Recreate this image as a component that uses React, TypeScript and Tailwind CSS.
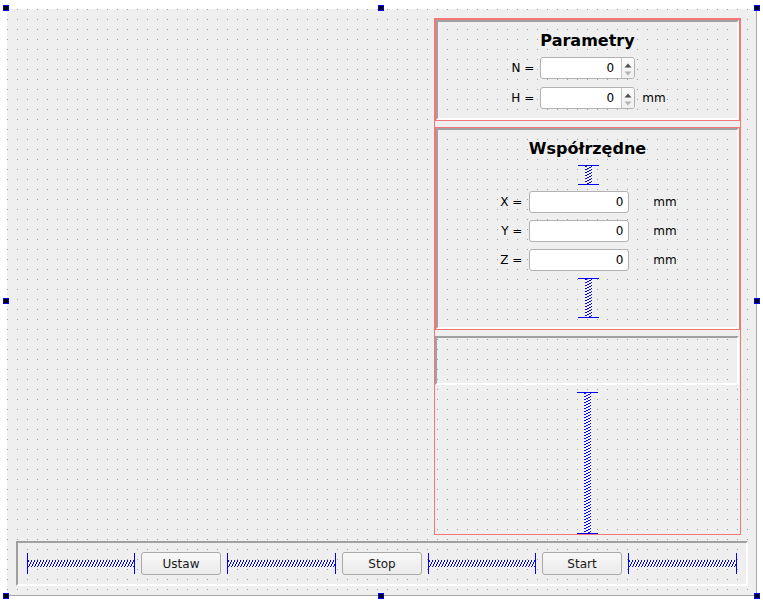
import React, { useId } from "react";

const OFFS = [0, 1, 1, 2, 2, 0, 0];

function HSpacer({ w }: { w: number }) {
  const id = useId().replace(/:/g, "");
  const h = 21;
  return (
    <svg width={w} height={h} shapeRendering="crispEdges" className="block shrink-0">
      <defs>
        <pattern id={"hp" + id} patternUnits="userSpaceOnUse" x={0} y={0} width={3} height={h}>
          {OFFS.map((o, k) => (
            <rect key={"w" + k} x={o} y={13 - k} width={1} height={1} fill="#ffffff" />
          ))}
          {OFFS.map((o, k) => (
            <rect key={"b" + k} x={(o + 1) % 3} y={13 - k} width={1} height={1} fill="#0000ff" />
          ))}
        </pattern>
      </defs>
      <rect x={1} y={0} width={w - 2} height={h} fill={"url(#hp" + id + ")"} />
      <rect x={0} y={0} width={1} height={h} fill="#0000ff" />
      <rect x={w - 1} y={0} width={1} height={h} fill="#0000ff" />
    </svg>
  );
}

function VSpacer({ h }: { h: number }) {
  const id = useId().replace(/:/g, "");
  const w = 21;
  return (
    <svg width={w} height={h} shapeRendering="crispEdges" className="block shrink-0">
      <defs>
        <pattern id={"vp" + id} patternUnits="userSpaceOnUse" x={0} y={0} width={w} height={3}>
          {OFFS.map((o, k) => (
            <rect key={"w" + k} x={13 - k} y={o} width={1} height={1} fill="#ffffff" />
          ))}
          {OFFS.map((o, k) => (
            <rect key={"b" + k} x={13 - k} y={(o + 1) % 3} width={1} height={1} fill="#0000ff" />
          ))}
        </pattern>
      </defs>
      <rect x={0} y={1} width={w} height={h - 2} fill={"url(#vp" + id + ")"} />
      <rect x={0} y={0} width={w} height={1} fill="#0000ff" />
      <rect x={0} y={h - 1} width={w} height={1} fill="#0000ff" />
    </svg>
  );
}

function Frame({ children, className }: { children?: React.ReactNode; className?: string }) {
  return (
    <div className={"border-2 border-t-[#a0a0a0] border-l-[#a0a0a0] border-b-white border-r-white " + (className ?? "")}>
      {children}
    </div>
  );
}

function SpinBox() {
  return (
    <div className="w-[95px] h-[22px] border border-[#b2b2b2] rounded-[3px] bg-white flex overflow-hidden">
      <div className="flex-1 flex items-center justify-end pr-[7px]">0</div>
      <div className="w-[13px] border-l border-[#c4c4c4] bg-[linear-gradient(#fbfbfb,#efefef)]">
        <svg width="12" height="20" className="block">
          <polygon points="2.5,9.5 6,5.5 9.5,9.5" fill="#4e4e4e" />
          <polygon points="2.5,13.5 9.5,13.5 6,17.5" fill="#b4b4b4" />
        </svg>
      </div>
    </div>
  );
}

function LineEdit() {
  return (
    <div className="w-[100px] h-[22px] border border-[#b2b2b2] rounded-[3px] bg-white flex items-center justify-end pr-[5px]">
      0
    </div>
  );
}

function Button({ label }: { label: string }) {
  return (
    <div className="w-[80px] h-[23px] shrink-0 border border-[#a9a9a9] rounded-[3px] bg-[linear-gradient(#f8f8f8,#ebebeb)] flex items-center justify-center text-[12px] leading-[14px] text-[#1a1a1a]">
      {label}
    </div>
  );
}

function Handle({ className }: { className: string }) {
  return <div className={"absolute w-[6px] h-[6px] bg-black border border-[#0000ff] " + className} />;
}

export default function App() {
  return (
    <div className="w-[763px] h-[601px] bg-white pl-[7px] pt-[9px] overflow-hidden font-['DejaVu_Sans','Liberation_Sans',sans-serif] text-[12px] leading-[14px] text-black">
      <div className="relative w-[750px] h-[587px] bg-[#efefef] border-r border-b border-[#a6a6a6] [background-image:conic-gradient(from_270deg_at_1px_1px,#9c9c9c_90deg,transparent_0deg)] [background-size:10px_10px] flex flex-col pt-[9px] pl-[9px] pr-[8px]">
        <div className="flex">
          <div className="flex-1" />
          <div className="w-[307px] h-[517px] mr-[7px] border border-[#f37777] flex flex-col">
            <div className="h-[102px] border border-[#f37777]">
              <Frame className="h-full flex flex-col items-center pt-[9px]">
                <div className="text-[16px] font-bold leading-[19px]">Parametry</div>
                <div className="mt-[7px] ml-[2px] grid grid-cols-[auto_95px_auto] gap-x-[6px] gap-y-[8px] items-center">
                  <span className="justify-self-end">N =</span>
                  <SpinBox />
                  <span />
                  <span className="justify-self-end">H =</span>
                  <SpinBox />
                  <span className="ml-[1px]">mm</span>
                </div>
              </Frame>
            </div>
            <div className="h-[203px] mt-[6px] border border-[#f37777]">
              <Frame className="h-full flex flex-col items-center pt-[9px]">
                <div className="text-[16px] font-bold leading-[19px]">Współrzędne</div>
                <div className="mt-[7px] ml-[1px]">
                  <VSpacer h={20} />
                </div>
                <div className="mt-[6px] ml-[2px] grid grid-cols-[auto_100px_auto] gap-x-[7px] gap-y-[7px] items-center">
                  <span className="justify-self-end">X =</span>
                  <LineEdit />
                  <span className="ml-[17px]">mm</span>
                  <span className="justify-self-end">Y =</span>
                  <LineEdit />
                  <span className="ml-[17px]">mm</span>
                  <span className="justify-self-end">Z =</span>
                  <LineEdit />
                  <span className="ml-[17px]">mm</span>
                </div>
                <div className="mt-[7px] ml-[1px]">
                  <VSpacer h={40} />
                </div>
              </Frame>
            </div>
            <Frame className="h-[49px] mt-[6px] mr-[1px]" />
            <div className="mt-[7px] flex-1 flex justify-center">
              <VSpacer h={142} />
            </div>
          </div>
        </div>
        <Frame className="mt-[6px] h-[45px] w-full flex items-center px-[9px] gap-[6px]">
          <HSpacer w={108} />
          <Button label="Ustaw" />
          <HSpacer w={109} />
          <Button label="Stop" />
          <HSpacer w={108} />
          <Button label="Start" />
          <HSpacer w={109} />
        </Frame>

        <Handle className="left-[-4px] top-[-4px]" />
        <Handle className="left-[371px] top-[-4px]" />
        <Handle className="left-[747px] top-[-4px]" />
        <Handle className="left-[-4px] top-[289px]" />
        <Handle className="left-[747px] top-[289px]" />
        <Handle className="left-[-4px] top-[584px]" />
        <Handle className="left-[371px] top-[584px]" />
        <Handle className="left-[747px] top-[584px]" />
      </div>
    </div>
  );
}
